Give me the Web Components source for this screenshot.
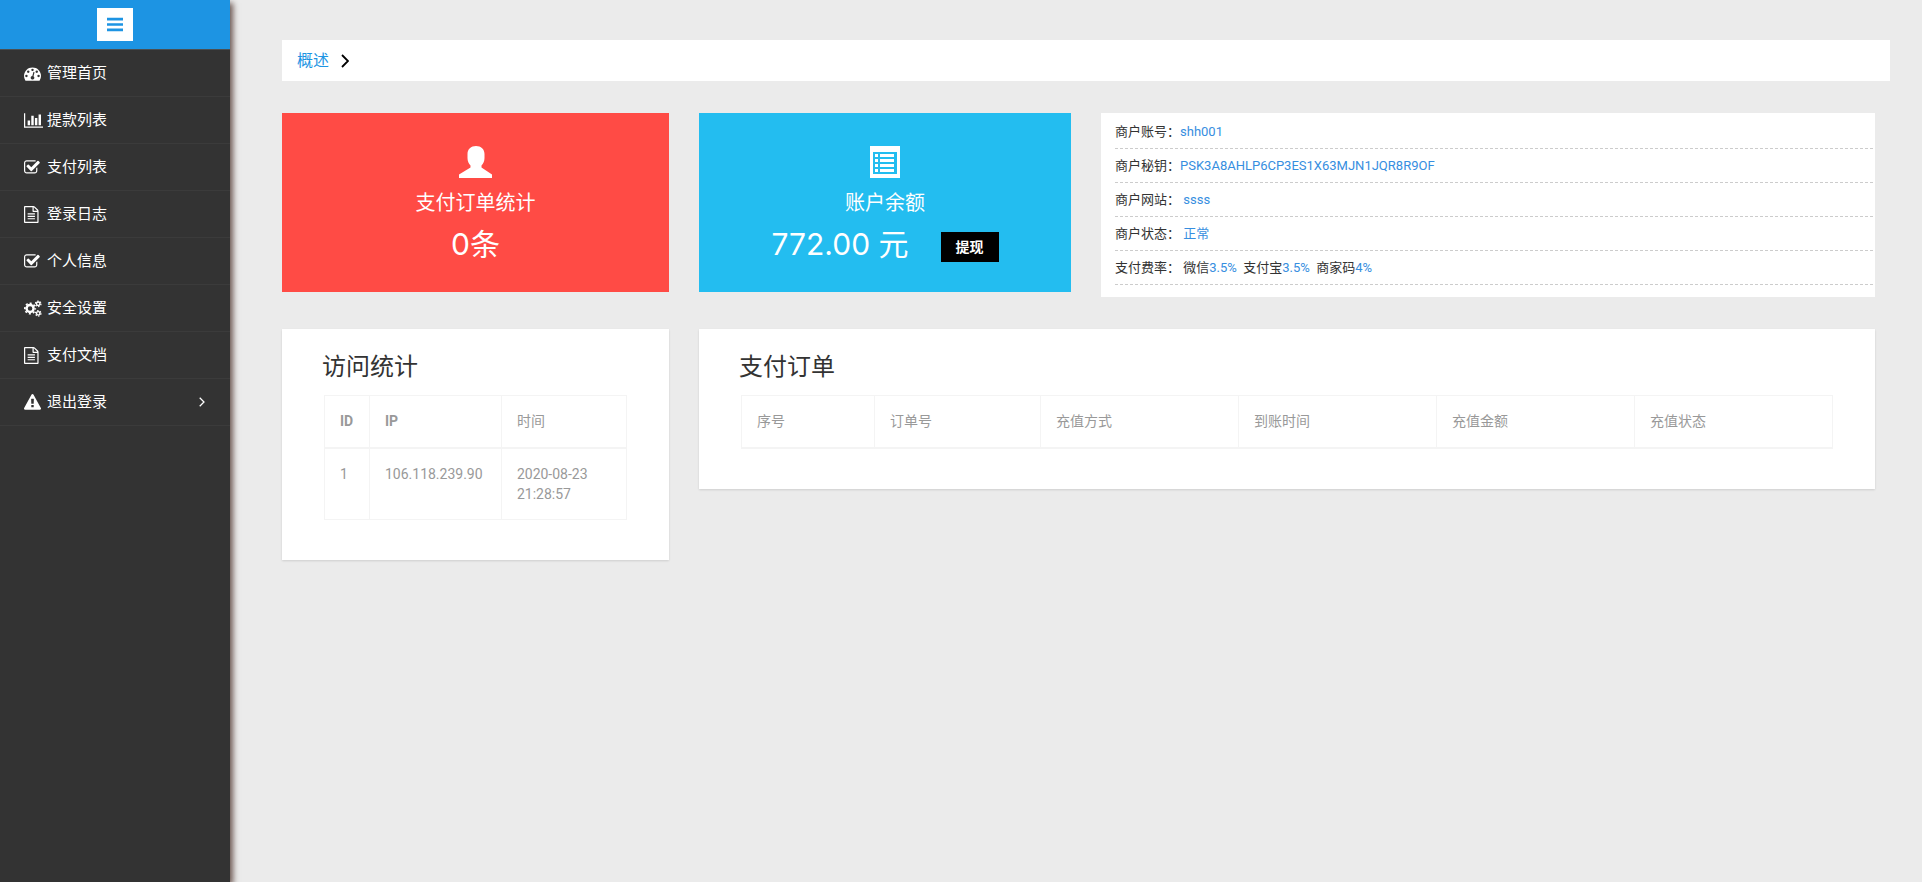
<!DOCTYPE html>
<html lang="zh-CN">
<head>
<meta charset="utf-8">
<meta name="viewport" content="width=device-width, initial-scale=1">
<title>概述</title>
<style>
  html, body { margin: 0; height: 100%; }
  body { background: #ebebeb; color: #333; font: 14px/20px Roboto, "Noto Sans CJK SC", sans-serif; }
</style>
</head>
<body>
<merchant-app></merchant-app>

<script>
(() => {
const ICONS = {
  bars: ['128 0 1536 1792', '<path d="M128 1280h1536v256H128zM128 768h1536v256H128zM128 256h1536v256H128z"/>'],
  dashboard: ['0 0 1792 1792', '<path d="M384 1152q0-53-37.500-90.500t-90.500-37.500-90.500 37.500-37.500 90.500 37.500 90.500 90.500 37.500 90.500-37.500 37.500-90.500zm192-448q0-53-37.500-90.500t-90.500-37.500-90.500 37.500-37.500 90.500 37.500 90.500 90.500 37.500 90.500-37.500 37.500-90.500zm428 481l101-382q6-26-7.500-48.500t-38.500-29.500-48 6.500-30 39.500l-101 382q-60 5-107 43.500t-63 98.500q-20 77 20 146t117 89 146-20 89-117q16-60-6-117t-72-91zm660-33q0-53-37.500-90.500t-90.500-37.500-90.500 37.500-37.500 90.500 37.500 90.500 90.500 37.500 90.500-37.500 37.500-90.500zm-640-640q0-53-37.500-90.500t-90.500-37.500-90.500 37.500-37.500 90.500 37.500 90.500 90.500 37.500 90.500-37.500 37.500-90.500zm448 192q0-53-37.500-90.500t-90.500-37.500-90.500 37.500-37.500 90.500 37.500 90.500 90.500 37.500 90.500-37.500 37.500-90.500zm320 448q0 261-141 483-19 29-54 29h-1402q-35 0-54-29-141-221-141-483 0-182 71-348t191-286 286-191 348-71 348 71 286 191 191 286 71 348z"/>'],
  chart: ['0 0 2048 1792', '<path d="M640 896v512H384V896zM1024 384v1024H768V384zM2048 1536v128H0V128h128v1408zM1408 640v768h-256V640zM1792 256v1152h-256V256z"/>'],
  check: ['64 0 1792 1792', '<path d="M1472 930v318q0 119-84.500 203.500t-203.500 84.500h-832q-119 0-203.500-84.500t-84.500-203.500v-832q0-119 84.500-203.500t203.500-84.500h832q63 0 117 25 15 7 18 23 3 17-9 29l-49 49q-10 10-23 10-3 0-9-2-23-6-45-6h-832q-66 0-113 47t-47 113v832q0 66 47 113t113 47h832q66 0 113-47t47-113v-254q0-13 9-22l64-64q10-10 23-10 6 0 12 3 20 8 20 29zm231-489l-814 814q-24 24-57 24t-57-24l-430-430q-24-24-24-57t24-57l110-110q24-24 57-24t57 24l263 263 647-647q24-24 57-24t57 24l110 110q24 24 24 57t-24 57z"/>'],
  file: ['128 0 1792 1792', '<path d="M1596 380q28 28 48 76t20 88v1152q0 40-28 68t-68 28h-1344q-40 0-68-28t-28-68v-1600q0-40 28-68t68-28h896q40 0 88 20t76 48zm-444-244v376h376q-10-29-22-41l-313-313q-12-12-41-22zm384 1528v-1024h-416q-40 0-68-28t-28-68v-416h-768v1536h1280zM512 768h768v128H512zM512 1024h768v128H512zM512 1280h768v128H512z"/>'],
  cogs: ['0 0 1920 1792', '<g fill="none" stroke="currentColor"><circle cx="640" cy="896" r="370" stroke-width="260"/><circle cx="640" cy="896" r="550" stroke-width="180" stroke-dasharray="216 216" stroke-dashoffset="108"/><circle cx="1500" cy="400" r="185" stroke-width="150"/><circle cx="1500" cy="400" r="290" stroke-width="130" stroke-dasharray="152 152"/><circle cx="1500" cy="1410" r="185" stroke-width="150"/><circle cx="1500" cy="1410" r="290" stroke-width="130" stroke-dasharray="152 152"/></g>'],
  warning: ['0 0 1792 1792', '<path d="M1024 1375v-190q0-14-9.500-23.500t-22.500-9.500h-192q-13 0-22.500 9.500t-9.500 23.500v190q0 14 9.500 23.500t22.500 9.500h192q13 0 22.500-9.500t9.500-23.500zm-2-374l18-459q0-12-10-19-13-11-24-11h-220q-11 0-24 11-10 7-10 21l17 457q0 10 10 16.500t24 6.500h185q14 0 23.500-6.500t10.500-16.500zm-14-934l768 1408q35 63-2 126-17 29-46.500 46t-63.500 17h-1536q-34 0-63.500-17t-46.500-46q-37-63-2-126l768-1408q17-31 47-49t65-18 65 18 47 49z"/>'],
  chevron: ['0 0 8 14', '<path d="M1 1l6 6-6 6" fill="none" stroke="currentColor" stroke-width="1.8"/>'],
  user: ['0 0 34 32', '<path d="M17 0c5 0 8.500 3 8.500 8v4c0 3-1.200 5.500-3 7.500v2L33 28.500V32H0v-3.500L11.500 21.500v-2c-1.800-2-3-4.500-3-7.500V8c0-5 3.500-8 8.500-8z"/>'],
  list: ['0 0 30 32', '<path fill-rule="evenodd" d="M0 0h30v32H0zM3 6v22h24V6z"/><path d="M5 8h3v3H5zM10 8h14v3H10zM5 13h3v3H5zM10 13h14v3H10zM5 18h3v3H5zM10 18h14v3H10zM5 23h3v3H5zM10 23h14v3H10z"/>']
};

function define(name, html, setup) {
  const template = document.createElement('template');
  template.innerHTML = html;
  class Component extends HTMLElement {
    connectedCallback() {
      if (this.shadowRoot) return;
      const root = this.attachShadow({ mode: 'open' });
      const content = document.importNode(template.content, true);
      if (setup) setup(this, content);
      root.append(content);
    }
  }
  customElements.define(name, Component);
}

define('ui-icon', `
  <style>
    :host { display: inline-flex; flex: none; height: 17px; }
    svg { display: block; height: 100%; fill: currentColor; }
  </style>
  <svg aria-hidden="true"></svg>`, (host, root) => {
  const [box, body] = ICONS[host.getAttribute('name')];
  const svg = root.querySelector('svg');
  svg.setAttribute('viewBox', box);
  svg.innerHTML = body;
});

define('nav-item', `
  <style>
    :host { display: block; border-bottom: 1px solid #3b3b3b; }
    a { display: grid; grid-template-columns: 23px 1fr auto; align-items: center; height: 46px; padding: 0 25px 0 24px; color: #fff; text-decoration: none; }
    .more { height: 10px; }
    .more[hidden] { display: none; }
  </style>
  <a href="#"><ui-icon></ui-icon><span><slot></slot></span><ui-icon class="more" name="chevron" hidden></ui-icon></a>`, (host, root) => {
  root.querySelector('ui-icon').setAttribute('name', host.getAttribute('icon'));
  root.querySelector('.more').hidden = !host.hasAttribute('more');
});

define('side-bar', `
  <style>
    :host { display: block; background: #333; font-size: 15px; box-shadow: 3px 3px 6px #6b5650; }
    header { display: flex; align-items: center; justify-content: center; height: 49px; background: #1d94e3; border-bottom: 1px solid #4a4f52; }
    button { display: grid; place-items: center; width: 36px; height: 33px; padding: 0; border: 0; background: #fff; color: #1d94e3; }
    button ui-icon { height: 19px; }
  </style>
  <header><button type="button" aria-label="菜单"><ui-icon name="bars"></ui-icon></button></header>
  <nav><slot></slot></nav>`);

define('bread-crumb', `
  <style>
    :host { display: flex; align-items: center; gap: 12px; height: 41px; padding: 0 15px; background: #fff; font-size: 16px; color: #000; }
    a { color: #1d94e3; text-decoration: none; }
    ui-icon { height: 14px; }
  </style>
  <a href="#"><slot></slot></a><ui-icon name="chevron"></ui-icon>`);

define('stat-card', `
  <style>
    :host { display: flex; flex-direction: column; align-items: center; padding: 33px 0 30px; background: var(--card); color: #fff; }
    .icon { height: 32px; }
    h2 { margin: 9px 0 8px; font-size: 20px; line-height: 32px; font-weight: 400; }
    .value { display: flex; align-items: flex-end; gap: 32px; font: 400 30px/35px Inter, "Noto Sans CJK SC", sans-serif; }
  </style>
  <ui-icon class="icon"></ui-icon>
  <h2></h2>
  <div class="value"><slot></slot><slot name="action"></slot></div>`, (host, root) => {
  root.querySelector('ui-icon').setAttribute('name', host.getAttribute('icon'));
  root.querySelector('h2').textContent = host.getAttribute('heading');
});

define('action-button', `
  <style>
    :host { display: block; }
    button { display: block; height: 30px; padding: 0 15px; border: 0; background: #000; color: #fff; font: 700 14px/30px Roboto, "Noto Sans CJK SC", sans-serif; }
  </style>
  <button type="button"><slot></slot></button>`);

define('info-row', `
  <style>
    :host { display: flex; border-bottom: 1px dashed #ccc; line-height: 33px; }
    ::slotted(b) { color: #368ee0; font-weight: 400; }
    .body { white-space: pre; }
  </style>
  <span class="label"></span><span class="body"><slot></slot></span>`, (host, root) => {
  root.querySelector('.label').textContent = host.getAttribute('label');
});

define('info-card', `
  <style>
    :host { display: block; padding: 2px 2px 12px 14px; background: #fff; font-size: 13px; }
  </style>
  <slot></slot>`);

define('data-panel', `
  <style>
    :host { display: block; padding: 20px 42px 40px; background: #fff; box-shadow: 0 1px 2px rgba(0,0,0,.12); }
    h2 { margin: 0 -2px 10px; font-size: 24px; line-height: 36px; font-weight: 400; }
    table { width: 100%; border-collapse: collapse; color: #999; }
    th, td { border: 1px solid #f4f4f4; padding: 15px; text-align: left; vertical-align: top; }
    th { border-bottom-width: 2px; font-weight: 700; line-height: 21px; }
    th:lang(zh) { font-weight: 400; }
  </style>
  <h2></h2>
  <table><colgroup></colgroup><thead><tr></tr></thead><tbody></tbody></table>`, (host, root) => {
  root.querySelector('h2').textContent = host.getAttribute('heading');
  const list = name => (host.getAttribute(name) || '').split('|').filter(Boolean);
  list('widths').forEach(w => {
    const col = document.createElement('col');
    col.style.width = w;
    root.querySelector('colgroup').append(col);
  });
  const fill = (row, tag, values) => values.forEach(v => {
    const cell = document.createElement(tag);
    cell.textContent = v;
    if (tag === 'th') { cell.scope = 'col'; cell.lang = /^\w+$/.test(v) ? 'en' : 'zh'; }
    row.append(cell);
  });
  fill(root.querySelector('thead tr'), 'th', list('columns'));
  const values = list('row');
  if (values.length) fill(root.querySelector('tbody').insertRow(), 'td', values);
});

define('merchant-app', `
  <style>
    :host { display: grid; grid-template-columns: 230px minmax(0, 1fr); min-height: 100vh; }
    side-bar { z-index: 1; }
    main { padding: 40px 32px 40px 52px; }
    .board { display: grid; grid-template-columns: 387fr 372fr 774fr; gap: 32px 30px; align-items: start; margin: 32px 15px 0 0; }
    .red { --card: #ff4b45; }
    .blue { --card: #23bdf0; }
    .wide { grid-column: span 2; }
  </style>
  <side-bar>
    <nav-item icon="dashboard">管理首页</nav-item>
    <nav-item icon="chart">提款列表</nav-item>
    <nav-item icon="check">支付列表</nav-item>
    <nav-item icon="file">登录日志</nav-item>
    <nav-item icon="check">个人信息</nav-item>
    <nav-item icon="cogs">安全设置</nav-item>
    <nav-item icon="file">支付文档</nav-item>
    <nav-item icon="warning" more>退出登录</nav-item>
  </side-bar>
  <main>
    <bread-crumb>概述</bread-crumb>
    <div class="board">
      <stat-card class="red" icon="user" heading="支付订单统计">0条</stat-card>
      <stat-card class="blue" icon="list" heading="账户余额">772.00 元<action-button slot="action">提现</action-button></stat-card>
      <info-card>
        <info-row label="商户账号："><b>shh001</b></info-row>
        <info-row label="商户秘钥："><b>PSK3A8AHLP6CP3ES1X63MJN1JQR8R9OF</b></info-row>
        <info-row label="商户网站："> <b>ssss</b></info-row>
        <info-row label="商户状态："> <b>正常</b></info-row>
        <info-row label="支付费率："> 微信<b>3.5%</b>  支付宝<b>3.5%</b>  商家码<b>4%</b></info-row>
      </info-card>
      <data-panel heading="访问统计" columns="ID|IP|时间" row="1|106.118.239.90|2020-08-23 21:28:57" widths="45px|132px|126px"></data-panel>
      <data-panel class="wide" heading="支付订单" columns="序号|订单号|充值方式|到账时间|充值金额|充值状态" widths="133px|166px|198px|198px|198px|198px"></data-panel>
    </div>
  </main>
</merchant-app>
`);
})();
</script>
</body>
</html>
